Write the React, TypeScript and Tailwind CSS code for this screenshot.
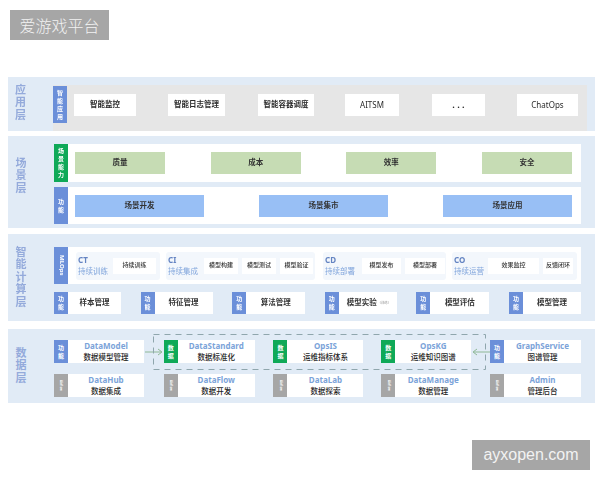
import React from "react";

function SideLabel({ text, className = "" }: { text: string; className?: string }) {
  return (
    <div className={`shrink-0 flex items-center justify-center text-[#94aadb] text-[11px] font-bold ${className}`}>
      <span className="[writing-mode:vertical-rl] [text-orientation:upright] tracking-[1.5px] leading-none">{text}</span>
    </div>
  );
}

function Badge({ chars, className }: { chars: string[]; className: string }) {
  return (
    <div className={`w-[14px] shrink-0 flex flex-col items-center justify-center text-white text-[6px] leading-[8px] font-bold ${className}`}>
      {chars.map((c, i) => (
        <span key={i}>{c}</span>
      ))}
    </div>
  );
}

function RotatedBadge({ text, className }: { text: string; className: string }) {
  return (
    <div className={`w-[14px] shrink-0 flex items-center justify-center text-white font-bold ${className}`}>
      <span className="[writing-mode:vertical-rl]">{text}</span>
    </div>
  );
}

function DataCell({
  name,
  sub,
  width,
  badge,
}: {
  name: string;
  sub: string;
  width: string;
  badge: React.ReactNode;
}) {
  return (
    <div className="flex h-[23px]">
      {badge}
      <div className={`bg-white flex flex-col items-center justify-center ${width}`}>
        <span className="text-[8px] leading-[10.6px] font-bold text-[#7ba3d9]">{name}</span>
        <span className="text-[7.5px] leading-[10.6px] font-medium text-[#1f1f1f]">{sub}</span>
      </div>
    </div>
  );
}

function FuncCell({ label, width, note }: { label: string; width: string; note?: string }) {
  return (
    <div className="flex h-[22px]">
      <Badge chars={["功", "能"]} className="bg-[#6b8fd9]" />
      <div className={`bg-white flex items-center justify-center text-[7.5px] font-bold text-[#333] ${width}`}>
        {label}
        {note && <span className="text-[3.5px] font-normal text-[#999] ml-[3px]">{note}</span>}
      </div>
    </div>
  );
}

function OpsGroup({
  code,
  title,
  titleWidth,
  items,
  width,
}: {
  code: string;
  title: string;
  titleWidth: string;
  items: { label: string; width: string }[];
  width: string;
}) {
  return (
    <div className={`h-[28px] bg-[#f3f7fc] rounded-[3px] flex items-center gap-[4px] pl-[2px] ${width}`}>
      <div className={`flex flex-col shrink-0 ${titleWidth}`}>
        <span className="text-[8px] leading-[10.6px] font-bold text-[#6484c2]">{code}</span>
        <span className="text-[7.5px] leading-[10.6px] text-[#82a6dc] whitespace-nowrap">{title}</span>
      </div>
      {items.map((it) => (
        <div key={it.label} className={`h-[16px] bg-white flex items-center justify-center text-[6px] font-medium text-[#333] whitespace-nowrap ${it.width}`}>
          {it.label}
        </div>
      ))}
    </div>
  );
}

function Arrow({ flip }: { flip?: boolean }) {
  return (
    <svg width="18" height="8" viewBox="0 0 18 8" fill="none" className={`shrink-0 ${flip ? "rotate-180" : ""}`}>
      <path d="M0 4H16M13 1L17 4L13 7" stroke="#8fb896" strokeWidth="1" />
    </svg>
  );
}

const blue = "bg-[#6b8fd9]";
const green = "bg-[#0fa958]";
const grey = "bg-[#a6a6a6]";

export default function App() {
  const dataBadge = <Badge chars={["数", "据"]} className={green} />;
  const funcBadge = <Badge chars={["功", "能"]} className={blue} />;
  const flowBadge = <RotatedBadge text="Airflow" className={`${grey} text-[3px]`} />;

  return (
    <div className="relative w-[600px] h-[480px] bg-white overflow-hidden font-['Noto_Sans','Noto_Sans_CJK_SC',sans-serif]">
      <div className="ml-[10px] mt-[10px] w-[99px] h-[30px] bg-[#a6a6a6] text-[#f2f2f2] text-[16px] flex items-center justify-center font-['Noto_Sans_CJK_SC',sans-serif] font-light">
        爱游戏平台
      </div>

      <div className="ml-[8px] mt-[37px] w-[587px] flex flex-col blur-[0.4px]">
        {/* 应用层 */}
        <div className="h-[54px] bg-[#e1ebf6] flex">
          <SideLabel text="应用层" className="w-[45px] pr-[21px] pb-[3px]" />
          <div className="flex-1 flex mt-[8px] h-[46px] bg-[#e6e6e6] mr-[8px] pt-[1px]">
            <Badge chars={["智", "能", "应", "用"]} className={`${blue} h-[37px]`} />
            <div className="flex-1 flex items-start pt-[8px] pl-[7px] text-[7.5px] text-[#2b2b2b] font-bold">
              <div className="w-[62px] h-[22px] bg-white flex items-center justify-center">智能监控</div>
              <div className="w-[57px] h-[22px] ml-[32px] bg-white flex items-center justify-center">智能日志管理</div>
              <div className="w-[56px] h-[22px] ml-[33px] bg-white flex items-center justify-center whitespace-nowrap">智能容器调度</div>
              <div className="w-[54px] h-[22px] ml-[31px] bg-white flex items-center justify-center font-normal text-[8px]">AITSM</div>
              <div className="w-[53px] h-[22px] ml-[33px] bg-white flex items-center justify-center text-[9px]">. . .</div>
              <div className="w-[61px] h-[22px] ml-[32px] bg-white flex items-center justify-center font-normal text-[8px]">ChatOps</div>
            </div>
          </div>
        </div>

        {/* 场景层 */}
        <div className="h-[92px] mt-[5px] bg-[#e1ebf6] flex">
          <SideLabel text="场景层" className="w-[46px] pr-[21px] pb-[12px]" />
          <div className="flex-1 flex flex-col pt-[8px] gap-[5px]">
            <div className="flex h-[38px]">
              <Badge chars={["场", "景", "能", "力"]} className={green} />
              <div className="w-[513px] bg-white flex items-center justify-between pl-[7px] pr-[9px] text-[7.5px] text-[#333] font-bold">
                {["质量", "成本", "效率", "安全"].map((t) => (
                  <div key={t} className="w-[90px] h-[22px] bg-[#c6dcb4] flex items-center justify-center">{t}</div>
                ))}
              </div>
            </div>
            <div className="flex h-[37px]">
              <Badge chars={["功", "能"]} className={blue} />
              <div className="w-[513px] bg-white flex items-center justify-between pl-[7px] pr-[9px] text-[7.5px] text-[#333] font-bold">
                {["场景开发", "场景集市", "场景应用"].map((t) => (
                  <div key={t} className="w-[129px] h-[22px] bg-[#98bff5] flex items-center justify-center">{t}</div>
                ))}
              </div>
            </div>
          </div>
        </div>

        {/* 智能计算层 */}
        <div className="h-[87px] mt-[6px] bg-[#e1ebf6] flex">
          <SideLabel text="智能计算层" className="w-[46px] pr-[21px]" />
          <div className="flex-1 flex flex-col pt-[13px]">
            <div className="flex h-[37px]">
              <RotatedBadge text="MLOps" className={`${blue} text-[6px]`} />
              <div className="w-[513px] bg-white flex items-center pl-[8px]">
                <OpsGroup
                  code="CT"
                  title="持续训练"
                  titleWidth="w-[31px]"
                  width="w-[84px]"
                  items={[{ label: "持续训练", width: "w-[43px]" }]}
                />
                <OpsGroup
                  code="CI"
                  title="持续集成"
                  titleWidth="w-[32px]"
                  width="w-[149px] ml-[6px]"
                  items={[
                    { label: "模型构建", width: "w-[34px]" },
                    { label: "模型测试", width: "w-[34px]" },
                    { label: "模型验证", width: "w-[33px]" },
                  ]}
                />
                <OpsGroup
                  code="CD"
                  title="持续部署"
                  titleWidth="w-[33px]"
                  width="w-[123px] ml-[8px]"
                  items={[
                    { label: "模型发布", width: "w-[39px]" },
                    { label: "模型部署", width: "w-[40px]" },
                  ]}
                />
                <OpsGroup
                  code="CO"
                  title="持续运营"
                  titleWidth="w-[30px]"
                  width="w-[125px] ml-[6px]"
                  items={[
                    { label: "效果监控", width: "w-[51px]" },
                    { label: "反馈闭环", width: "w-[30px]" },
                  ]}
                />
              </div>
            </div>
            <div className="flex justify-between w-[527px] mt-[8px]">
              <FuncCell label="样本管理" width="w-[53px]" />
              <FuncCell label="特征管理" width="w-[58px]" />
              <FuncCell label="算法管理" width="w-[59px]" />
              <FuncCell label="模型实验" note="(训练)" width="w-[58px]" />
              <FuncCell label="模型评估" width="w-[59px]" />
              <FuncCell label="模型管理" width="w-[58px]" />
            </div>
          </div>
        </div>

        {/* 数据层 */}
        <div className="relative h-[74px] mt-[8px] bg-[#e1ebf6] flex">
          <SideLabel text="数据层" className="w-[46px] pr-[21px]" />
          <div className="flex-1 flex flex-col pt-[11px] gap-[11px]">
            <div className="flex items-center w-[527px]">
              <DataCell name="DataModel" sub="数据模型管理" width="w-[76px]" badge={funcBadge} />
              <div className="w-[20px] flex justify-center"><Arrow /></div>
              <DataCell name="DataStandard" sub="数据标准化" width="w-[77px]" badge={dataBadge} />
              <div className="w-[19px]" />
              <DataCell name="OpsIS" sub="运维指标体系" width="w-[76px]" badge={dataBadge} />
              <div className="w-[18px]" />
              <DataCell name="OpsKG" sub="运维知识图谱" width="w-[76px]" badge={dataBadge} />
              <div className="w-[19px] flex justify-center"><Arrow flip /></div>
              <DataCell name="GraphService" sub="图谱管理" width="w-[77px]" badge={funcBadge} />
            </div>
            <div className="flex items-center w-[527px]">
              <DataCell name="DataHub" sub="数据集成" width="w-[76px]" badge={flowBadge} />
              <div className="w-[20px]" />
              <DataCell name="DataFlow" sub="数据开发" width="w-[77px]" badge={flowBadge} />
              <div className="w-[19px]" />
              <DataCell name="DataLab" sub="数据探索" width="w-[76px]" badge={flowBadge} />
              <div className="w-[18px]" />
              <DataCell name="DataManage" sub="数据管理" width="w-[76px]" badge={flowBadge} />
              <div className="w-[19px]" />
              <DataCell name="Admin" sub="管理后台" width="w-[77px]" badge={flowBadge} />
            </div>
          </div>
          {/* dashed outline round the three shared data services */}
          <svg width="334" height="37" viewBox="0 0 334 37" fill="none" className="absolute left-[145px] top-[5px]">
            <rect x="0.5" y="0.5" width="332" height="35" stroke="#8fa6ad" strokeDasharray="6 5" />
          </svg>
        </div>
      </div>

      <div className="ml-auto mr-[10px] mt-[37px] w-[118px] h-[30px] bg-[#a6a6a6] text-[#f2f2f2] text-[16px] flex items-center justify-center font-['Liberation_Sans',sans-serif]">
        ayxopen.com
      </div>
    </div>
  );
}
